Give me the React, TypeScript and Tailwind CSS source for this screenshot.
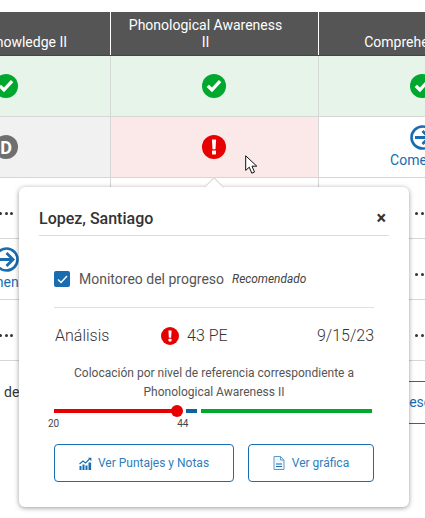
const columns = ["Alphabet Knowledge II", "Phonological Awareness II", "Comprehension", "Vocabulary"];

function CheckIcon() {
  return (
    <svg width="24" height="24" viewBox="0 0 24 24">
      <circle cx="12" cy="12" r="12" fill="#00a82d" />
      <path d="M4.6 13l2.4-2.2 2.9 2.8 7-7.6 2.4 2.2-9.3 10z" fill="#fff" />
    </svg>
  );
}

function AlertIcon({ size = 24 }: { size?: number }) {
  return (
    <svg width={size} height={size} viewBox="0 0 24 24">
      <circle cx="12" cy="12" r="12" fill="#e60000" />
      <path d="M9.9 4.6h4.2l-.6 9.6h-3z" fill="#fff" />
      <rect x="10" y="15.6" width="4" height="3.8" rx="0.6" fill="#fff" />
    </svg>
  );
}

function ArrowIcon() {
  return (
    <svg width="25" height="25" viewBox="0 0 25 25" fill="none" stroke="#1a6cb0">
      <circle cx="12.5" cy="12.5" r="11" strokeWidth="2.6" />
      <path d="M5 12.5h13.5M12.5 6l6.5 6.5-6.5 6.5" strokeWidth="2.8" />
    </svg>
  );
}

function Comenzar() {
  return (
    <div className="flex flex-col items-center">
      <ArrowIcon />
      <span className="text-[14px] leading-[20px] text-[#1a6cb0]">Comenzar</span>
    </div>
  );
}

function Dots() {
  return (
    <div className="mt-[10px] flex gap-[2.5px]">
      <span className="h-[3px] w-[3px] rounded-full bg-[#333]" />
      <span className="h-[3px] w-[3px] rounded-full bg-[#333]" />
      <span className="h-[3px] w-[3px] rounded-full bg-[#333]" />
    </div>
  );
}

function Row({ cells, bgs }: { cells: React.ReactNode[]; bgs: string[] }) {
  return (
    <div className="flex h-[61px]">
      {cells.map((cell, i) => (
        <div
          key={i}
          className={`flex w-[208px] shrink-0 items-center justify-center border-r border-b border-[#d6d6d6] pr-[1px] ${bgs[i]}`}
        >
          {cell}
        </div>
      ))}
    </div>
  );
}

const white = ["bg-white", "bg-white", "bg-white", "bg-white"];

function ChartIcon() {
  return (
    <svg width="13" height="13" viewBox="0 0 13 13" fill="#1a6cb0" className="mr-[6px]">
      <rect x="0.5" y="9" width="2" height="4" />
      <rect x="3.5" y="7.5" width="2" height="5.5" />
      <rect x="6.5" y="8.5" width="2" height="4.5" />
      <rect x="9.5" y="5.5" width="2.6" height="7.5" />
      <path d="M0.5 7l3.5-3 2.5 2 4-4" fill="none" stroke="#1a6cb0" strokeWidth="1.1" />
      <path d="M9 0.8h3.4v3.4z" />
    </svg>
  );
}

function FileIcon() {
  return (
    <svg width="12" height="14" viewBox="0 0 12 14" fill="none" stroke="#5f9bcc" className="mr-[7px]">
      <path d="M1 .5h6.5L11 4v9.5H1z" fill="#eef5fb" />
      <path d="M7.5.5V4H11" />
      <path d="M3 8h6M3 10.5h6" stroke="#1a6cb0" />
    </svg>
  );
}

function Popover() {
  return (
    <div className="absolute left-[19px] top-[187px] h-[320px] w-[390px] rounded-md bg-white px-[20px] shadow-[0_1px_5px_rgba(0,0,0,0.4)]">
      <div className="absolute -top-[7px] left-[188px] h-[14px] w-[14px] rotate-45 border-t border-l border-[#d6d6d6] bg-white" />
      <div className="relative flex h-[49px] items-center justify-between border-b border-[#dcdcdc] pt-[16px] pr-[3px]">
        <span className="text-[16px] font-medium text-[#333]">Lopez, Santiago</span>
        <span className="-mt-[3px] text-[18px] font-bold leading-none text-[#333]">×</span>
      </div>

      <div className="mx-[15px]">
        <div className="flex h-[72px] items-center border-b border-[#e0e0e0] pt-[15px]">
          <span className="flex h-[16px] w-[16px] items-center justify-center rounded-[2px] bg-[#1a6cb0]">
            <svg width="11" height="9" viewBox="0 0 11 9" fill="none" stroke="#fff" strokeWidth="1.4">
              <path d="M1 4.5l3 3 6-6.5" />
            </svg>
          </span>
          <span className="ml-[9px] text-[14px] text-[#555]">Monitoreo del progreso</span>
          <span className="ml-[8px] mt-[1px] text-[11.9px] italic text-[#444]">Recomendado</span>
        </div>

        <div className="flex h-[56px] items-center justify-between text-[16px] font-light text-[#333]">
          <span className="ml-[1px] w-[106px]">Análisis</span>
          <div className="flex items-center gap-[8px]">
            <AlertIcon size={18} />
            <span>43 PE</span>
          </div>
          <span className="ml-auto">9/15/23</span>
        </div>

        <p className="text-center text-[12px] leading-[19px] text-[#555]">
          Colocación por nivel de referencia correspondiente a
          <br />
          Phonological Awareness II
        </p>

        <div className="mt-[7px] flex h-[4px] w-[318px] items-center">
          <div className="relative h-[4px] w-[123px] bg-[#e60000]">
            <span className="absolute -right-[6px] -top-[4px] h-[12px] w-[12px] rounded-full bg-[#e60000]" />
          </div>
          <div className="ml-[9px] h-[4px] w-[11px] bg-[#11639c]" />
          <div className="ml-[4px] h-[4px] w-[171px] bg-[#00a82d]" />
        </div>
        <div className="mt-[4px] flex text-[10px] leading-[14px] text-[#444]">
          <span className="-ml-[6px]">20</span>
          <span className="ml-[118px]">44</span>
        </div>

        <div className="mt-[13px] flex justify-between text-[12px] text-[#2f7dbd]">
          <button className="flex h-[38px] w-[180px] items-center justify-center rounded-[4px] border border-[#1a6cb0]">
            <ChartIcon />
            Ver Puntajes y Notas
          </button>
          <button className="flex h-[38px] w-[126px] items-center justify-center rounded-[4px] border border-[#1a6cb0]">
            <FileIcon />
            Ver gráfica
          </button>
        </div>
      </div>
    </div>
  );
}

export default function App() {
  return (
    <div className="relative h-[518px] w-[425px] overflow-hidden bg-white pt-[12px] font-['Roboto',sans-serif]">
      <div className="-ml-[97px] w-[832px]">
        <div className="flex h-[44px] border-b border-[#444] bg-[#555]">
          {columns.map((name) => (
            <div
              key={name}
              className="flex w-[208px] shrink-0 items-end justify-center border-r border-white pb-[4px] pl-[16px] pr-[34px] text-center text-[14px] leading-[17px] text-white"
            >
              {name}
            </div>
          ))}
        </div>

        <Row
          cells={[<CheckIcon />, <CheckIcon />, <CheckIcon />, <CheckIcon />]}
          bgs={["bg-[#e6f4ea]", "bg-[#e6f4ea]", "bg-[#e6f4ea]", "bg-[#e6f4ea]"]}
        />
        <Row
          cells={[
            <span className="flex h-[24px] w-[24px] items-center justify-center rounded-full bg-[#6f6f6f] text-[18px] font-bold text-white">D</span>,
            <AlertIcon />,
            <Comenzar />,
            <Comenzar />,
          ]}
          bgs={["bg-[#f1f1f1]", "bg-[#fbe9e9]", "bg-white", "bg-white"]}
        />
        <Row cells={[<Dots />, <Dots />, <Dots />, <Dots />]} bgs={white} />
        <Row cells={[<Comenzar />, <Dots />, <Dots />, <Dots />]} bgs={white} />
        <Row cells={[<Dots />, <Dots />, <Dots />, <Dots />]} bgs={white} />

        <div className="flex">
          <div className="w-[416px] pl-[101px] pt-[21px] text-[14px] leading-[20px] text-[#333]">de</div>
          <button className="ml-[12px] mt-[20px] flex h-[43px] w-[160px] items-center rounded-[4px] border border-[#1a6cb0] pl-[68px] text-[14px] text-[#1a6cb0]">
            Descargar
          </button>
        </div>
      </div>

      <svg width="14" height="20" viewBox="0 0 14 20" className="absolute left-[245px] top-[155px]">
        <path d="M.7.8v14.6l3.6-3.2 2.5 6 2.7-1.2-2.5-5.8h4.8z" fill="#fff" stroke="#111" strokeWidth="1" />
      </svg>

      <Popover />
    </div>
  );
}
